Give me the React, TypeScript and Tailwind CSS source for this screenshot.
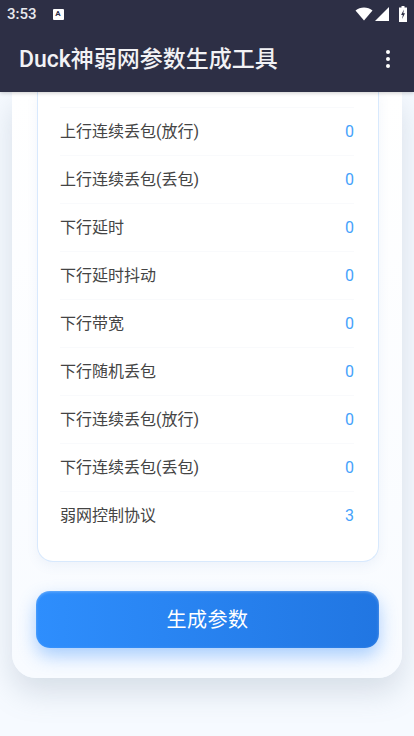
const CJK = "font-['Roboto','Noto_Sans_CJK_SC',sans-serif]";

const ROWS = [
  { label: "上行连续丢包(放行)", value: 0 },
  { label: "上行连续丢包(丢包)", value: 0 },
  { label: "下行延时", value: 0 },
  { label: "下行延时抖动", value: 0 },
  { label: "下行带宽", value: 0 },
  { label: "下行随机丢包", value: 0 },
  { label: "下行连续丢包(放行)", value: 0 },
  { label: "下行连续丢包(丢包)", value: 0 },
  { label: "弱网控制协议", value: 3 },
];

function StatusBar() {
  return (
    <div className="flex h-[28px] items-center pl-[7px] pr-[7px] text-white">
      <span className="pt-[1px] text-[15px] font-medium leading-none text-[#e8e9ee]">3:53</span>
      <div className="ml-[16px] flex h-[11px] w-[11px] items-center justify-center rounded-[1px] bg-white">
        <span className="text-[8px] font-bold leading-none text-[#2d2f45]">A</span>
      </div>
      <div className="ml-auto flex items-center gap-[2px]">
        <svg width="18" height="14" viewBox="0 0 18 14">
          <path d="M0.5 3.5C5 -0.6 13 -0.6 17.5 3.5L9 13.5Z" fill="#fff" />
        </svg>
        <svg width="14" height="14" viewBox="0 0 14 14">
          <path d="M14 0V14H0Z" fill="#fff" />
        </svg>
        <svg className="ml-[8px]" width="8" height="16" viewBox="0 0 8 16">
          <path d="M2.5 0H5.5V1.5H8V16H0V1.5H2.5Z" fill="#fff" />
          <path d="M4.9 3.5L2.1 9H3.8L3.1 13L6 7.2H4.3Z" fill="#2d2f45" />
        </svg>
      </div>
    </div>
  );
}

function Row({ label, value, last }: { label: string; value: number; last?: boolean }) {
  return (
    <div className={`flex h-[48px] items-center justify-between ${last ? "" : "border-b border-[#f9fafc] pt-[1px]"}`}>
      <span className="text-[16px] text-[#444444]">{label}</span>
      <span className="text-[16px] text-[#45a2fb]">{value}</span>
    </div>
  );
}

export default function App() {
  return (
    <div className={`flex h-[736px] w-[414px] flex-col overflow-hidden bg-[#f6faff] ${CJK}`}>
      <header className="z-10 h-[92px] shrink-0 bg-[#2d2f45] shadow-[0_1px_4px_rgba(0,0,0,0.2)]">
        <StatusBar />
        <div className="flex h-[64px] items-center justify-between pb-[2px] pl-[19px] pr-[24px]">
          <h1 className="text-[23px] font-medium leading-none text-[#f2f2f5]">Duck神弱网参数生成工具</h1>
          <div className="flex flex-col gap-[3px]">
            <span className="h-[4px] w-[4px] rounded-full bg-white" />
            <span className="h-[4px] w-[4px] rounded-full bg-white" />
            <span className="h-[4px] w-[4px] rounded-full bg-white" />
          </div>
        </div>
      </header>

      <div className="px-[12px]">
        <div className="h-[586px] rounded-b-[24px] bg-gradient-to-b from-white to-[#f8fbff] pl-[24px] pr-[23px] shadow-[0_14px_30px_rgba(120,140,160,0.25)]">
          <div className="ml-[1px] rounded-b-[16px] border border-t-0 border-[#d8e9fd] bg-white pb-[21px] pl-[22px] pr-[24px] pt-[15px] shadow-[0_4px_12px_rgba(90,130,190,0.08)]">
            <div className="border-t border-[#f9fafc]">
              {ROWS.map((r, i) => (
                <Row key={r.label} label={r.label} value={r.value} last={i === ROWS.length - 1} />
              ))}
            </div>
          </div>
          <button className="mt-[29px] flex h-[57px] w-full items-center justify-center rounded-[14px] bg-gradient-to-r from-[#2e8efd] to-[#2176e2] pt-[1px] text-[20px] tracking-[0.5px] text-white shadow-[0_8px_18px_rgba(70,150,250,0.45),inset_0_1px_3px_rgba(255,255,255,0.3)]">
            生成参数
          </button>
        </div>
      </div>
    </div>
  );
}
